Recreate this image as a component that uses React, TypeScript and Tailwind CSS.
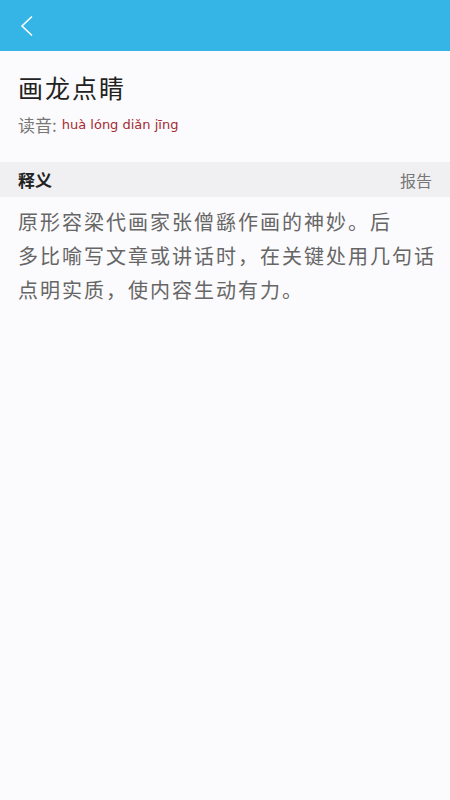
import React from "react";

const lines = [
  "原形容梁代画家张僧繇作画的神妙。后",
  "多比喻写文章或讲话时，在关键处用几句话",
  "点明实质，使内容生动有力。",
];

export default function App() {
  return (
    <div
      className="flex h-[800px] w-[450px] flex-col bg-[#fbfafc]"
      style={{ fontFamily: '"Noto Sans CJK SC", "Noto Sans", sans-serif' }}
    >
      <div className="flex h-[51px] items-center bg-[#35b4e6] pl-[19px]">
        <svg width="16" height="22" viewBox="0 0 16 22" fill="none">
          <path d="M13 1.5 L3 11 L13 20.5" stroke="#ffffff" strokeWidth="1.6" />
        </svg>
      </div>

      <div className="px-[18px] pt-[18px] pb-[25px]">
        <h1 className="text-[25px] leading-[36px] tracking-[2px] text-[#222]">画龙点睛</h1>
        <div className="mt-[8px] flex items-center">
          <span className="text-[17px] leading-[24px] text-[#777]">读音:</span>
          <span
            className="ml-[5px] text-[13px] leading-[24px] text-[#a52a32]"
            style={{ fontFamily: '"DejaVu Sans", sans-serif' }}
          >
            huà lóng diǎn jīng
          </span>
        </div>
      </div>

      <div className="flex h-[35px] items-center justify-between bg-[#f0eff1] px-[18px]">
        <span className="text-[17px] font-bold text-[#222]">释义</span>
        <span className="text-[16px] text-[#777]">报告</span>
      </div>

      <div className="px-[18px] pt-[8px] text-[20px] leading-[34px] tracking-[2px] text-[#666]">
        {lines.map((l) => (
          <div key={l} className="whitespace-nowrap">
            {l}
          </div>
        ))}
      </div>
    </div>
  );
}
